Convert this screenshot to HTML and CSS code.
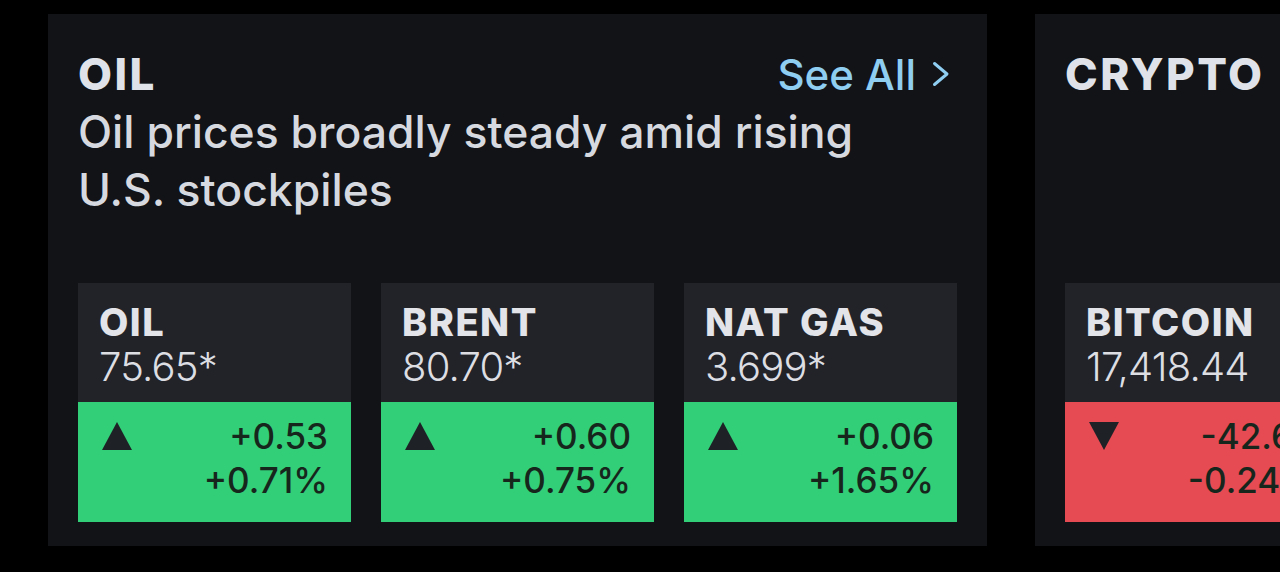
FILE: index.html
```html
<!DOCTYPE html>
<html>
<head>
<meta charset="utf-8">
<link rel="stylesheet" href="styles.css">
</head>
<body>
<div class="strip">
  <section class="card">
    <div class="head">
      <h2 class="title">OIL</h2>
      <a class="see-all">See All
        <svg class="chev" viewBox="0 0 18 26" width="18" height="26"><path d="M2.5 2.5 L15 13 L2.5 23.5" fill="none" stroke="currentColor" stroke-width="3" stroke-linecap="round" stroke-linejoin="round"/></svg>
      </a>
    </div>
    <p class="headline">Oil prices broadly steady amid rising U.S. stockpiles</p>
    <div class="tiles">
      <div class="tile">
        <div class="top"><div class="name">OIL</div><div class="price">75.65*</div></div>
        <div class="chg up"><svg class="tri" viewBox="0 0 30 28" width="30" height="28"><path d="M15 0 L30 28 L0 28 Z"/></svg><div class="nums"><div>+0.53</div><div>+0.71%</div></div></div>
      </div>
      <div class="tile">
        <div class="top"><div class="name">BRENT</div><div class="price">80.70*</div></div>
        <div class="chg up"><svg class="tri" viewBox="0 0 30 28" width="30" height="28"><path d="M15 0 L30 28 L0 28 Z"/></svg><div class="nums"><div>+0.60</div><div>+0.75%</div></div></div>
      </div>
      <div class="tile">
        <div class="top"><div class="name">NAT GAS</div><div class="price">3.699*</div></div>
        <div class="chg up"><svg class="tri" viewBox="0 0 30 28" width="30" height="28"><path d="M15 0 L30 28 L0 28 Z"/></svg><div class="nums"><div>+0.06</div><div>+1.65%</div></div></div>
      </div>
    </div>
  </section>
  <section class="card">
    <div class="head">
      <h2 class="title">CRYPTO</h2>
    </div>
    <p class="headline"></p>
    <div class="tiles">
      <div class="tile">
        <div class="top"><div class="name">BITCOIN</div><div class="price">17,418.44</div></div>
        <div class="chg down"><svg class="tri" viewBox="0 0 30 28" width="30" height="28"><path d="M0 0 L30 0 L15 28 Z"/></svg><div class="nums"><div>-42.63</div><div>-0.24%</div></div></div>
      </div>
    </div>
  </section>
</div>
</body>
</html>
```
FILE: styles.css
```css
html, body {
  margin: 0;
  padding: 0;
  background: #000;
  overflow: hidden;
}
body {
  font-family: Inter, "Open Sans", sans-serif;
  width: 1280px;
  height: 572px;
}
.strip {
  display: flex;
  gap: 48px;
  padding: 14px 0 0 48px;
}
.card {
  flex: 0 0 939px;
  box-sizing: border-box;
  height: 532px;
  background: #111317;
  padding: 32px 30px 0 30px;
  display: flex;
  flex-direction: column;
}
.head {
  display: flex;
  justify-content: space-between;
  align-items: center;
  height: 56px;
}
.title {
  margin: 0;
  font-size: 44px;
  line-height: 56px;
  font-weight: 800;
  color: #dfe2e9;
  letter-spacing: 2.5px;
}
.see-all {
  color: #8fcdf1;
  font-size: 42px;
  font-weight: 500;
  display: flex;
  align-items: center;
  gap: 16px;
  margin-right: 7px;
}
.chev { display: block; }
.headline {
  margin: 1px 0 0;
  font-size: 44.5px;
  line-height: 58px;
  font-weight: 500;
  color: #d6d9df;
  width: 820px;
  height: 116px;
}
.tiles {
  display: flex;
  gap: 30px;
  margin-top: 64px;
}
.tile {
  flex: 0 0 273px;
  height: 239px;
  display: flex;
  flex-direction: column;
}
.top {
  background: #212328;
  height: 119px;
  box-sizing: border-box;
  padding: 16px 21px 0;
}
.name {
  font-size: 38px;
  font-weight: 800;
  color: #e2e4ea;
  line-height: 46px;
  letter-spacing: 1.5px;
}
.price {
  font-size: 40px;
  font-weight: 300;
  color: #dcdee3;
  line-height: 44px;
  letter-spacing: -0.8px;
  white-space: nowrap;
}
.chg {
  flex: 1;
  display: flex;
  justify-content: space-between;
  align-items: flex-start;
  padding: 12px 23px 0 24px;
  color: #17261d;
}
.chg.up { background: #33cf78; }
.chg.down { background: #e64b53; }
.tri {
  display: block;
  margin-top: 8px;
  fill: #1e2227;
}
.nums {
  text-align: right;
  font-size: 35px;
  line-height: 44px;
  font-weight: 500;
  white-space: nowrap;
}
```
